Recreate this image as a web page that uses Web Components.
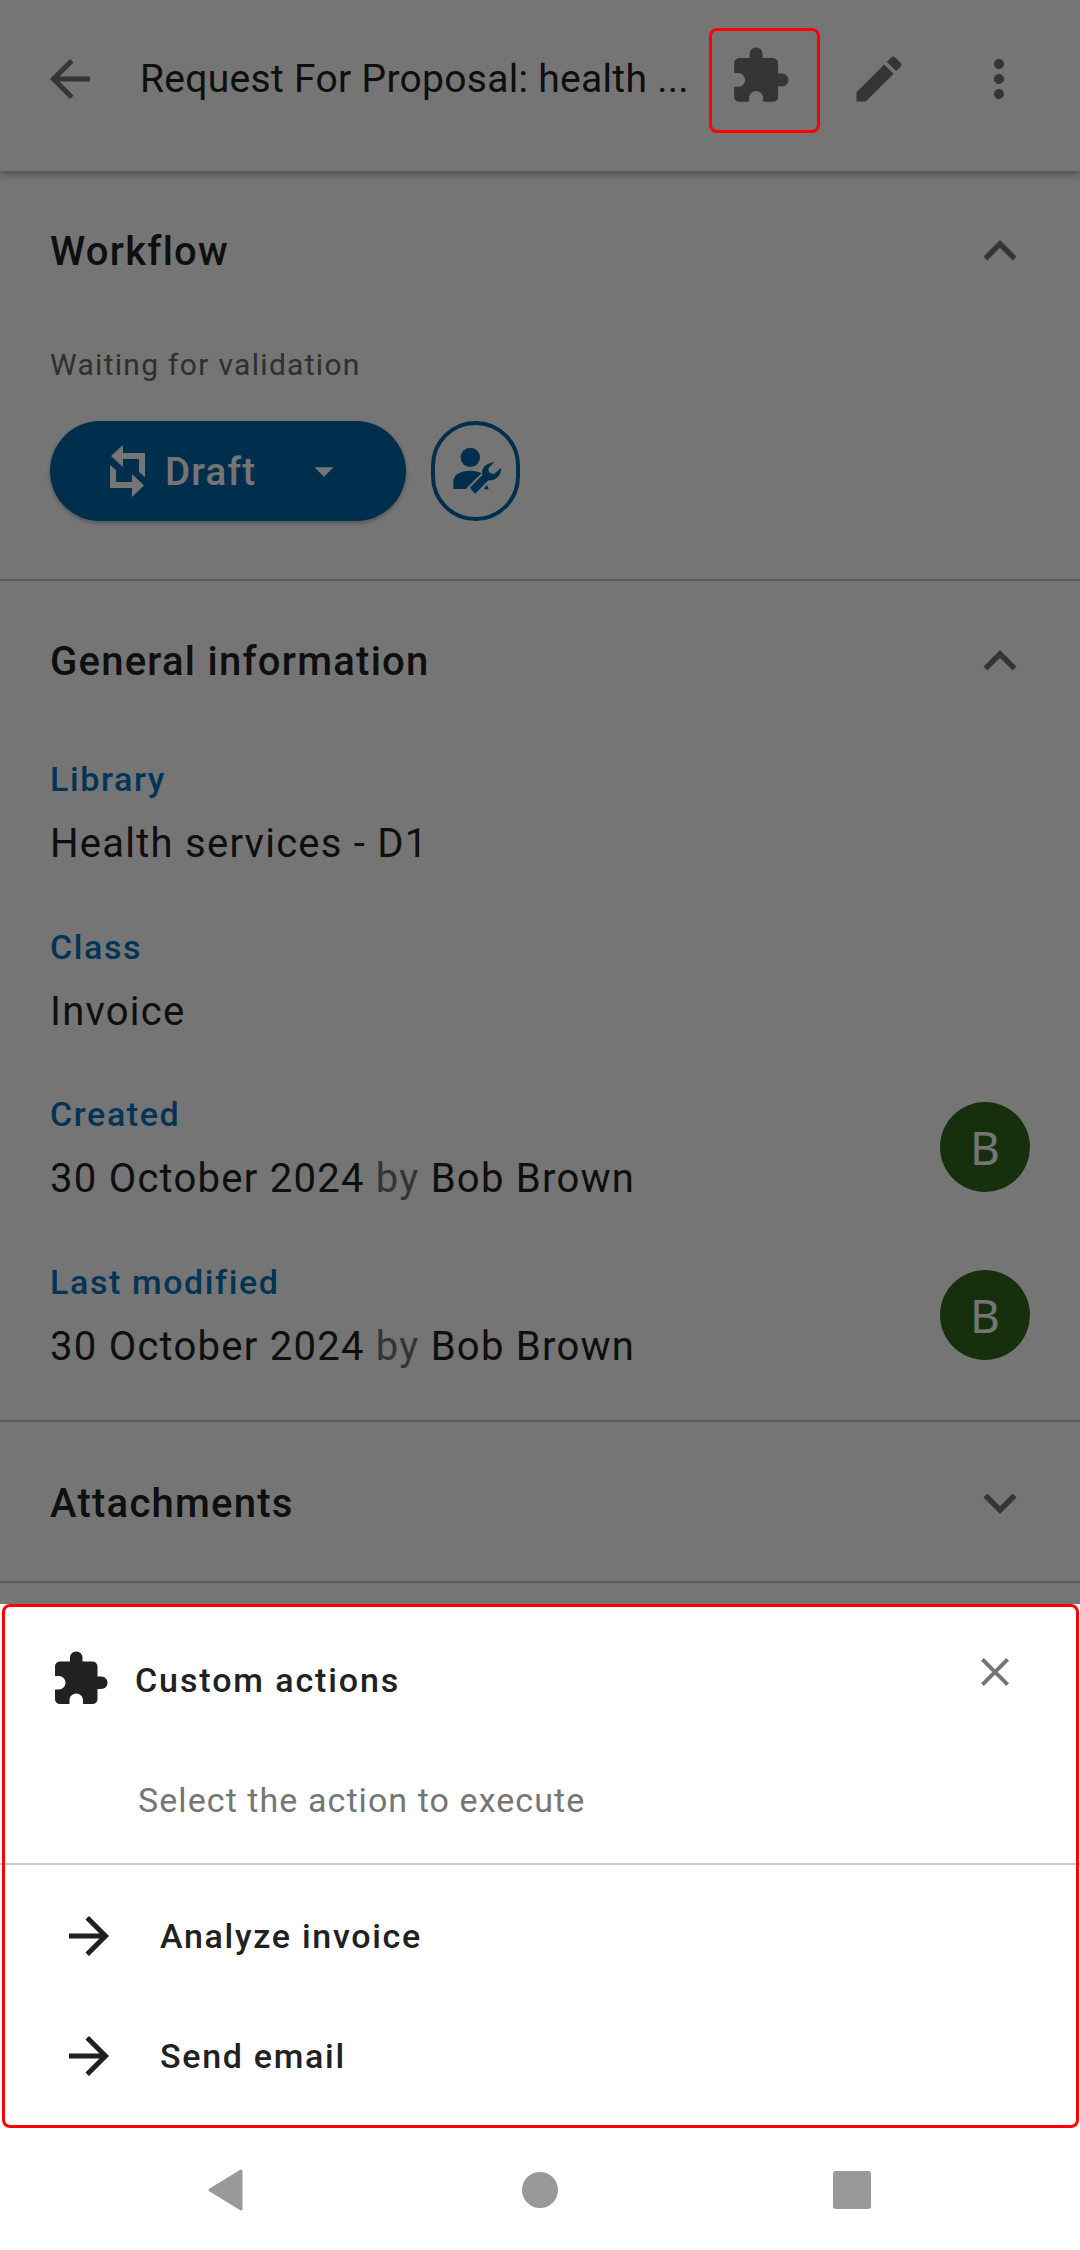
<!DOCTYPE html>
<html><head><meta charset="utf-8">
<style>
html,body{margin:0;padding:0;background:#fff}
body{font-family:Roboto,"Liberation Sans",sans-serif;color:#212121;width:1080px;height:2250px;overflow:hidden}
</style></head><body>
<template id="t-icon"><style>:host{display:inline-flex;flex:none;line-height:0}svg{display:block;width:var(--s,66px);height:var(--s,66px);fill:currentColor}</style><svg viewBox="0 0 24 24"><path></path></svg></template>
<script>
const P={
ext:"M20.5 11H19V7c0-1.1-.9-2-2-2h-4V3.5C13 2.12 11.88 1 10.5 1S8 2.12 8 3.5V5H4c-1.1 0-1.99.9-1.99 2v3.8H3.5c1.49 0 2.7 1.21 2.7 2.7s-1.21 2.7-2.7 2.7H2V20c0 1.1.9 2 2 2h3.8v-1.5c0-1.49 1.21-2.7 2.7-2.7 1.49 0 2.7 1.21 2.7 2.7V22H17c1.1 0 2-.9 2-2v-4h1.5c1.38 0 2.5-1.12 2.5-2.5S21.88 11 20.5 11z",
edit:"M3 17.25V21h3.75L17.81 9.94l-3.75-3.75L3 17.25zM20.71 7.04c.39-.39.39-1.02 0-1.41l-2.34-2.34c-.39-.39-1.02-.39-1.41 0l-1.83 1.83 3.75 3.75 1.83-1.83z",
more:"M12 8c1.1 0 2-.9 2-2s-.9-2-2-2-2 .9-2 2 .9 2 2 2zm0 2c-1.1 0-2 .9-2 2s.9 2 2 2 2-.9 2-2-.9-2-2-2zm0 6c-1.1 0-2 .9-2 2s.9 2 2 2 2-.9 2-2-.9-2-2-2z",
back:"M20 11H7.83l5.59-5.59L12 4l-8 8 8 8 1.41-1.41L7.83 13H20v-2z",
fwd:"M12 4l-1.41 1.41L16.17 11H4v2h12.17l-5.58 5.59L12 20l8-8z",
close:"M19 6.41L17.59 5 12 10.59 6.41 5 5 6.41 10.59 12 5 17.59 6.41 19 12 13.41 17.59 19 19 17.59 13.41 12z",
up:"M12 8l-6 6 1.41 1.41L12 10.83l4.59 4.58L18 14z",
down:"M16.59 8.59L12 13.17 7.41 8.59 6 10l6 6 6-6z",
drop:"M7 10l5 5 5-5z"};
customElements.define('x-icon',class extends HTMLElement{constructor(){super();const r=this.attachShadow({mode:'open'});r.append(document.getElementById('t-icon').content.cloneNode(true));}
connectedCallback(){this.upd();}
static get observedAttributes(){return['name'];}
attributeChangedCallback(){this.upd();}
upd(){const n=this.getAttribute('name');if(n)this.shadowRoot.querySelector('path').setAttribute('d',P[n]);const s=this.getAttribute('size');if(s)this.style.setProperty('--s',s+'px');}});
function el(name,css,html){customElements.define(name,class extends HTMLElement{constructor(){super();this.attachShadow({mode:'open'}).innerHTML='<style>'+css+'</style>'+html;}});}
el('x-appbar',`:host{display:block;height:171px;background:#fff;box-shadow:0 3px 8px rgba(0,0,0,.35);position:relative;z-index:1;color:#757575}
.t{font-size:39px;line-height:50px;letter-spacing:.3px;color:#212121;left:140px;top:54px;white-space:nowrap;position:absolute}
x-icon{position:absolute}`,
`<x-icon name="back" size="60" style="left:40px;top:49px"></x-icon><span class="t"><slot></slot></span><x-icon name="ext" size="62" style="left:729px;top:45px"></x-icon><x-icon name="edit" size="60" style="left:849px;top:49px"></x-icon><x-icon name="more" size="60" style="left:969px;top:49px"></x-icon>`);
el('x-section',`:host{display:block;box-sizing:border-box;border-bottom:2px solid #c2c2c2;padding:0 50px}
.h{display:flex;justify-content:space-between;align-items:center;height:var(--hh,160px);font-size:40px;font-weight:500;letter-spacing:1.25px}
x-icon{color:#757575;margin-right:-3px}
`,`<div class="h"><slot name="title"></slot><x-icon id="c" name="up" size="66"></x-icon></div><slot></slot>`);
el('x-draft',`:host{display:flex;align-items:center;width:356px;height:100px;border-radius:50px;background:#0068ab;color:#fff;box-sizing:border-box;padding-left:55px;box-shadow:0 2px 4px rgba(0,0,0,.3);font-size:38.5px;font-weight:500;letter-spacing:1.2px;flex:none}
svg{width:45px;height:60px;fill:#fff;margin-right:15px;flex:none}span{width:136px;flex:none}`,
`<svg viewBox="105 441 45 60"><path d="M111 456 123 445V453H145V477L139 472V459H123V467Z"></path><path d="M110 465 116 470V482H132V474L144 485.500 132 497V488H110Z"></path></svg><span><slot></slot></span><x-icon name="drop" size="46"></x-icon>`);
el('x-tech',`:host{display:block;width:89px;height:100px;box-sizing:border-box;border:4px solid #0068ab;border-radius:50px;flex:none;position:relative;color:#0068ab}
svg{position:absolute;left:-10px;top:-10px;width:100px;height:110px;fill:currentColor}`,
`<svg viewBox="0 0 300 330"><circle cx="136" cy="127" r="29"></circle><path d="M85 222V200C85 180 105 167 136 167 150 167 160 170 170 174L122 222Z"></path><path d="M135 218 172 180C168 160 180 145 208 141L190 160 192 172 206 178 228 158C230 180 212 198 190 196L150 237Z"></path><path d="M176 223H191L186 209Z"></path></svg>`);
el('x-field',`:host{display:flex;align-items:center;justify-content:space-between;height:167.7px;font-size:40px}
.w{align-self:flex-start;margin-top:30px}
.l{color:#0073bd;font-size:34px;font-weight:500;letter-spacing:1.6px;line-height:44px;display:block}
.v{letter-spacing:1.25px;line-height:48px;display:block;margin-top:19px;white-space:nowrap}`,
`<div class="w"><span class="l"><slot name="label"></slot></span><span class="v"><slot></slot></span></div><slot name="side"></slot>`);
el('x-avatar',`:host{display:flex;align-items:center;justify-content:center;width:90px;height:90px;border-radius:50%;background:#30681c;color:#fff;font-size:46px;font-family:"Noto Sans",sans-serif;position:relative;top:1px}`,`<slot></slot>`);
el('x-action',`:host{display:flex;align-items:center;height:120px;padding-left:59px;font-size:34px;font-weight:500;letter-spacing:1.7px;color:#212121}
x-icon{margin-right:41px}`,`<x-icon name="fwd" size="60"></x-icon><slot></slot>`);
el('x-sheet',`:host{display:block;position:absolute;left:0;right:0;top:1604px;height:526px;background:#fff;z-index:3;color:#212121}
.h{display:flex;align-items:center;height:150px;padding:0 0 0 50px;font-size:34px;font-weight:500;letter-spacing:1.9px;position:relative}
.h span{margin-left:25px;position:relative;top:1px}
.x{position:absolute;left:971px;top:44px;color:#757575}
.s{height:109px;padding-left:138px;font-size:34px;color:#757575;letter-spacing:1.07px;box-sizing:border-box;line-height:93px}
.d{height:2px;background:#c8ccd4}
.a{padding-top:11px}`,
`<div class="h"><x-icon name="ext" size="60"></x-icon><span>Custom actions</span><x-icon class="x" name="close" size="48"></x-icon></div><div class="s">Select the action to execute</div><div class="d"></div><div class="a"><slot></slot></div>`);
el('x-navbar',`:host{display:block;position:absolute;left:0;right:0;top:2130px;height:120px;background:#fff;z-index:3}
svg{position:absolute;fill:#999}`,
`<svg style="left:206px;top:38px" width="38" height="44" viewBox="0 0 38 44"><path d="M35 3 4 22l31 19z" stroke="#999" stroke-width="3" stroke-linejoin="round"></path></svg><svg style="left:522px;top:42px" width="36" height="36"><circle cx="18" cy="18" r="18"></circle></svg><svg style="left:833px;top:41px" width="38" height="38"><rect width="38" height="38" rx="3"></rect></svg>`);
el('x-annot',`:host{display:block;position:absolute;box-sizing:border-box;border:3px solid #f00;border-radius:8px;z-index:5}`,``);
el('x-page',`:host{display:block;position:relative;width:1080px;height:2250px;overflow:hidden;background:#fff}
.scrim{position:absolute;inset:0;background:rgba(0,0,0,.54);z-index:2}`,`<slot></slot><div class="scrim"></div>`);
</script>
<x-page>
<x-appbar>Request For Proposal: health ...</x-appbar>
<x-section style="height:410px;--hh:160px"><span slot="title">Workflow</span>
<div style="font-size:30px;letter-spacing:1.3px;color:#666;line-height:40px;margin-top:14px">Waiting for validation</div>
<div style="display:flex;gap:25px;margin-top:36px"><x-draft>Draft</x-draft><x-tech></x-tech></div>
</x-section>
<x-section style="height:841px;--hh:160px"><span slot="title">General information</span>
<div style="margin-top:-14px">
<x-field><span slot="label">Library</span>Health services - D1</x-field>
<x-field><span slot="label">Class</span>Invoice</x-field>
<x-field><span slot="label">Created</span>30 October 2024 <span style="color:#757575">by</span> Bob Brown<x-avatar slot="side">B</x-avatar></x-field>
<x-field><span slot="label">Last modified</span>30 October 2024 <span style="color:#757575">by</span> Bob Brown<x-avatar slot="side">B</x-avatar></x-field>
</div>
</x-section>
<x-section id="at" style="height:161px;--hh:162px"><span slot="title">Attachments</span></x-section>
<x-sheet><x-action>Analyze invoice</x-action><x-action>Send email</x-action></x-sheet>
<x-navbar></x-navbar>
<x-annot style="left:709px;top:28px;width:111px;height:105px"></x-annot>
<x-annot style="left:2px;top:1604px;width:1077px;height:524px"></x-annot>
</x-page>
<script>document.querySelector('#at').shadowRoot.querySelector('#c').setAttribute('name','down');</script>
</body></html>
